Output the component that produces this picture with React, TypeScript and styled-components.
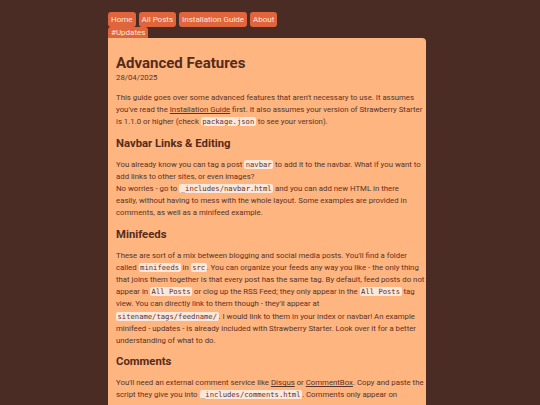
import { FC, Fragment, ReactNode } from 'react';
import styled, { createGlobalStyle } from 'styled-components';

const COLORS = {
  BG: '#4a2c25',
  TAB: '#e0643c',
  TAB_TEXT: '#ffe9dc',
  PANEL: '#ffb57f',
  TEXT: '#5a3326',
  HEADING: '#552b1c',
  CODE_BG: '#fde6da',
};

const GlobalStyle = createGlobalStyle`
  html, body {
    margin: 0;
    padding: 0;
    background: ${COLORS.BG};
  }
  body {
    font-family: Roboto, 'Noto Sans', sans-serif;
  }
`;

type NavItem = { label: string; href: string };

const NAV_ITEMS: NavItem[] = [
  { label: 'Home', href: '#' },
  { label: 'All Posts', href: '#' },
  { label: 'Installation Guide', href: '#' },
  { label: 'About', href: '#' },
];

const Code: FC<{ children: ReactNode }> = ({ children }) => <Mono>{children}</Mono>;

// keeps the wrapping of the original page: one entry per rendered line
const Lines: FC<{ lines: ReactNode[] }> = ({ lines }) => (
  <Para>
    {lines.map((line, i) => (
      <Fragment key={i}>
        {i > 0 && <br />}
        {line}
      </Fragment>
    ))}
  </Para>
);

const App: FC = () => {
  return (
    <>
      <GlobalStyle />
      <Page>
        <Nav>
          <NavRow>
            {NAV_ITEMS.map((item) => (
              <Tab key={item.label} href={item.href}>
                {item.label}
              </Tab>
            ))}
          </NavRow>
          <NavRow>
            <Tab href="#" short>
              #Updates
            </Tab>
          </NavRow>
        </Nav>
        <Panel>
          <Title>Advanced Features</Title>
          <DateLine>28/04/2025</DateLine>
          <Lines
            lines={[
              "This guide goes over some advanced features that aren't necessary to use. It assumes",
              <>
                you've read the <Link href="#">Installation Guide</Link> first. It also assumes your
                version of Strawberry Starter
              </>,
              <>
                is 1.1.0 or higher (check <Code>package.json</Code> to see your version).
              </>,
            ]}
          />

          <Heading>Navbar Links &amp; Editing</Heading>
          <Lines
            lines={[
              <>
                You already know you can tag a post <Code>navbar</Code> to add it to the navbar. What
                if you want to
              </>,
              'add links to other sites, or even images?',
              <>
                No worries - go to <Code>_includes/navbar.html</Code> and you can add new HTML in there
              </>,
              'easily, without having to mess with the whole layout. Some examples are provided in',
              'comments, as well as a minifeed example.',
            ]}
          />

          <Heading>Minifeeds</Heading>
          <Lines
            lines={[
              "These are sort of a mix between blogging and social media posts. You'll find a folder",
              <>
                called <Code>minifeeds</Code> in <Code>src</Code>. You can organize your feeds any way
                you like - the only thing
              </>,
              'that joins them together is that every post has the same tag. By default, feed posts do not',
              <>
                appear in <Code>All Posts</Code> or clog up the RSS Feed; they only appear in the{' '}
                <Code>All Posts</Code> tag
              </>,
              "view. You can directly link to them though - they'll appear at",
              <>
                <Code>sitename/tags/feedname/</Code>. I would link to them in your index or navbar! An
                example
              </>,
              'minifeed - updates - is already included with Strawberry Starter. Look over it for a better',
              'understanding of what to do.',
            ]}
          />

          <Heading>Comments</Heading>
          <Lines
            lines={[
              <>
                You'll need an external comment service like <Link href="#">Disqus</Link> or{' '}
                <Link href="#">CommentBox</Link>. Copy and paste the
              </>,
              <>
                script they give you into <Code>_includes/comments.html</Code>. Comments only appear on
              </>,
              'individual posts, not on tag pages or the index.',
            ]}
          />
        </Panel>
      </Page>
    </>
  );
};

export default App;

const Page = styled.div`
  width: 318px;
  margin-left: 108px;
  padding-top: 12px;
`;

const Nav = styled.nav`
  display: flex;
  flex-direction: column;
`;

const NavRow = styled.div`
  display: flex;
  gap: 3px;
`;

const Tab = styled.a<{ short?: boolean }>`
  display: flex;
  align-items: center;
  height: ${(props) => (props.short ? '11px' : '15px')};
  padding: 0 3px;
  background: ${COLORS.TAB};
  color: ${COLORS.TAB_TEXT};
  font-size: 8px;
  text-decoration: none;
  border-radius: 3px 3px ${(props) => (props.short ? '0 0' : '3px 3px')};
  white-space: nowrap;
`;

const Panel = styled.main`
  background: ${COLORS.PANEL};
  border-radius: 0 4px 4px 4px;
  padding: 8px 8px 16px;
  color: ${COLORS.TEXT};
  min-height: 400px;
`;

const Title = styled.h1`
  margin: 9px 0 0;
  font-size: 15px;
  line-height: 17px;
  font-weight: 700;
  color: ${COLORS.HEADING};
`;

const DateLine = styled.div`
  font-size: 7.8px;
  line-height: 12px;
`;

const Heading = styled.h2`
  margin: 8px 0;
  font-size: 11.3px;
  line-height: 14px;
  font-weight: 700;
  color: ${COLORS.HEADING};
`;

const Para = styled.p`
  margin: 8px 0;
  font-size: 7.8px;
  line-height: 12.2px;
  white-space: nowrap;
`;

const Link = styled.a`
  color: inherit;
  text-decoration: underline;
`;

const Mono = styled.code`
  font-family: 'DejaVu Sans Mono', 'Liberation Mono', monospace;
  font-size: 7.2px;
  background: ${COLORS.CODE_BG};
  padding: 0 1.5px;
  border-radius: 2px;
`;
